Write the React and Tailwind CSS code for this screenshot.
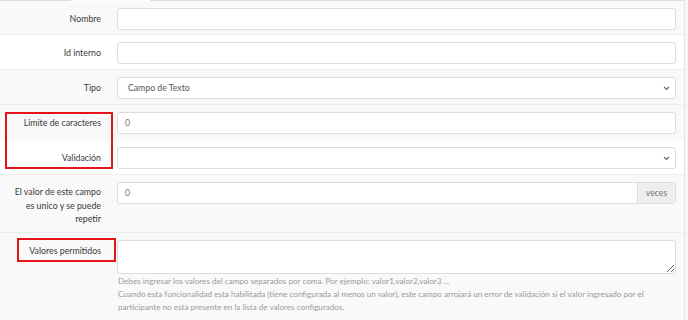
import React from "react";

const Chevron = () => (
  <svg width="7" height="5" viewBox="0 0 7 5" className="absolute right-[5px] top-[8px]">
    <path d="M1 1 L3.5 3.5 L6 1" fill="none" stroke="#666" strokeWidth="1.1" />
  </svg>
);

const Label = ({ children, extra = "" }) => (
  <div className={`w-[108px] shrink-0 pr-[7px] text-right text-[8.8px] text-[#3a3a3a] ${extra}`}>{children}</div>
);

export default function App() {
  return (
    <div className="relative w-[688px] h-[320px] overflow-hidden bg-[#f7f7f7] font-['Lato','Open_Sans',sans-serif]">
      <div className="flex h-[1px] w-[684px]">
        <div className="w-[71px] bg-[#ddd]" />
        <div className="w-[79px] bg-white" />
        <div className="flex-1 bg-[#ddd]" />
      </div>
      <div className="w-[685px] border-r border-[#e6e6e6] bg-white">
        {/* Nombre */}
        <div className="flex h-[34px] border-b border-[#eee] bg-[#f9f9f9] pt-[7px]">
          <Label extra="leading-[22px]">Nombre</Label>
          <div className="flex-1 pl-[9px] pr-[8px]">
            <div className="h-[22px] rounded-[3px] border border-[#ddd] bg-white" />
          </div>
        </div>
        {/* Id interno */}
        <div className="flex h-[35px] border-b border-[#eee] bg-white pt-[7px]">
          <Label extra="leading-[22px]">Id interno</Label>
          <div className="flex-1 pl-[9px] pr-[8px]">
            <div className="h-[22px] rounded-[3px] border border-[#ddd] bg-white" />
          </div>
        </div>
        {/* Tipo */}
        <div className="flex h-[35px] border-b border-[#eee] bg-[#f9f9f9] pt-[7px]">
          <Label extra="leading-[22px]">Tipo</Label>
          <div className="flex-1 pl-[9px] pr-[8px]">
            <div className="relative h-[22px] rounded-[3px] border border-[#ddd] bg-white pl-[10px] text-[8.7px] leading-[20px] text-[#555]">
              Campo de Texto
              <Chevron />
            </div>
          </div>
        </div>
        {/* Limite */}
        <div className="flex h-[35px] bg-[#f9f9f9] pt-[7px]">
          <Label extra="leading-[22px]">Limite de caracteres</Label>
          <div className="flex-1 pl-[9px] pr-[8px]">
            <div className="h-[22px] rounded-[3px] border border-[#ddd] bg-white pl-[7px] text-[8.7px] leading-[20px] text-[#777]">
              0
            </div>
          </div>
        </div>
        {/* Validación */}
        <div className="flex h-[35px] border-b border-[#eee] bg-white pt-[7px]">
          <Label extra="leading-[22px]">Validación</Label>
          <div className="flex-1 pl-[9px] pr-[8px]">
            <div className="relative h-[22px] rounded-[3px] border border-[#ddd] bg-white">
              <Chevron />
            </div>
          </div>
        </div>
        {/* El valor */}
        <div className="flex h-[58px] border-b border-[#eee] bg-[#f9f9f9] pt-[7px]">
          <Label extra="leading-[13.5px] pt-[3px]">
            El valor de este campo
            <br />
            es unico y se puede
            <br />
            repetir
          </Label>
          <div className="flex-1 pl-[9px] pr-[8px]">
            <div className="flex h-[22px] rounded-[3px] border border-[#ddd] bg-white text-[8.7px] leading-[20px]">
              <div className="flex-1 pl-[7px] text-[#777]">0</div>
              <div className="w-[38px] rounded-r-[3px] border-l border-[#ddd] bg-[#eee] text-center text-[#777]">veces</div>
            </div>
          </div>
        </div>
        {/* Valores permitidos */}
        <div className="flex h-[87px] bg-[#f9f9f9] pt-[7px]">
          <Label extra="leading-[22px]">Valores permitidos</Label>
          <div className="flex-1 pl-[9px] pr-[8px]">
            <textarea className="block h-[34px] w-full rounded-[3px] border border-[#ddd] bg-white outline-none" />
            <div className="mt-[1px] pl-[1px] text-[8.1px] leading-[13px] text-[#9a9a9a]">
              <div>Debes ingresar los valores del campo separados por coma. Por ejemplo: valor1,valor2,valor3 ...</div>
              <div>Cuando esta funcionalidad esta habilitada (tiene configurada al menos un valor), este campo arrojará un error de validación si el valor ingresado por el</div>
              <div>participante no esta presente en la lista de valores configurados.</div>
            </div>
          </div>
        </div>
      </div>
      {/* annotation boxes */}
      <div className="absolute left-[5px] top-[112px] h-[57px] w-[108px] border-2 border-[#e3151a]" />
      <div className="absolute left-[17px] top-[238px] h-[24px] w-[99px] border-2 border-[#e3151a]" />
    </div>
  );
}
